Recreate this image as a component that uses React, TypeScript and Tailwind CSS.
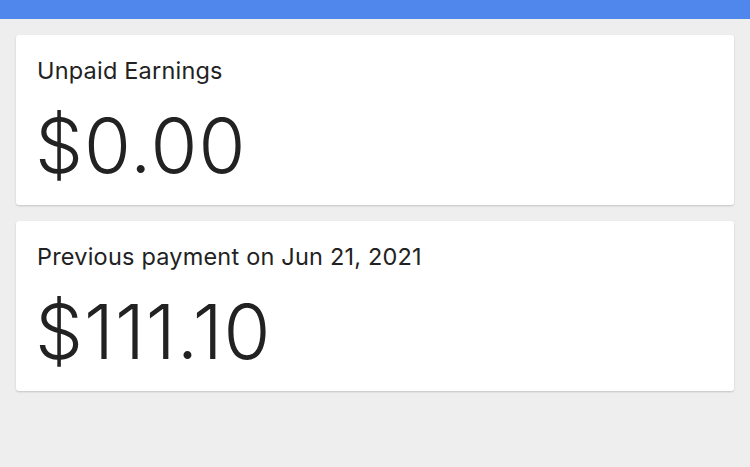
import React from "react";

function Card({ label, value }: { label: string; value: string }) {
  return (
    <div className="bg-white rounded-[3px] shadow-[0_1px_2px_rgba(0,0,0,0.18)] h-[170px] px-[21px] pt-[22px]">
      <div className="text-[23.5px] leading-[28px] text-[#222] tracking-[0.2px]">{label}</div>
      <div className="text-[76px] leading-[80px] font-light text-[#222] mt-[20px] -ml-[2px] tracking-[1px]">{value}</div>
    </div>
  );
}

export default function App() {
  return (
    <div className="w-[750px] h-[467px] bg-[#eeeeee] overflow-hidden" style={{ fontFamily: "Inter, 'Noto Sans', sans-serif" }}>
      <div className="h-[19px] bg-[#5087ec]" />
      <div className="flex flex-col gap-[16px] px-[16px] pt-[16px]">
        <Card label="Unpaid Earnings" value="$0.00" />
        <Card label="Previous payment on Jun 21, 2021" value="$111.10" />
      </div>
    </div>
  );
}
